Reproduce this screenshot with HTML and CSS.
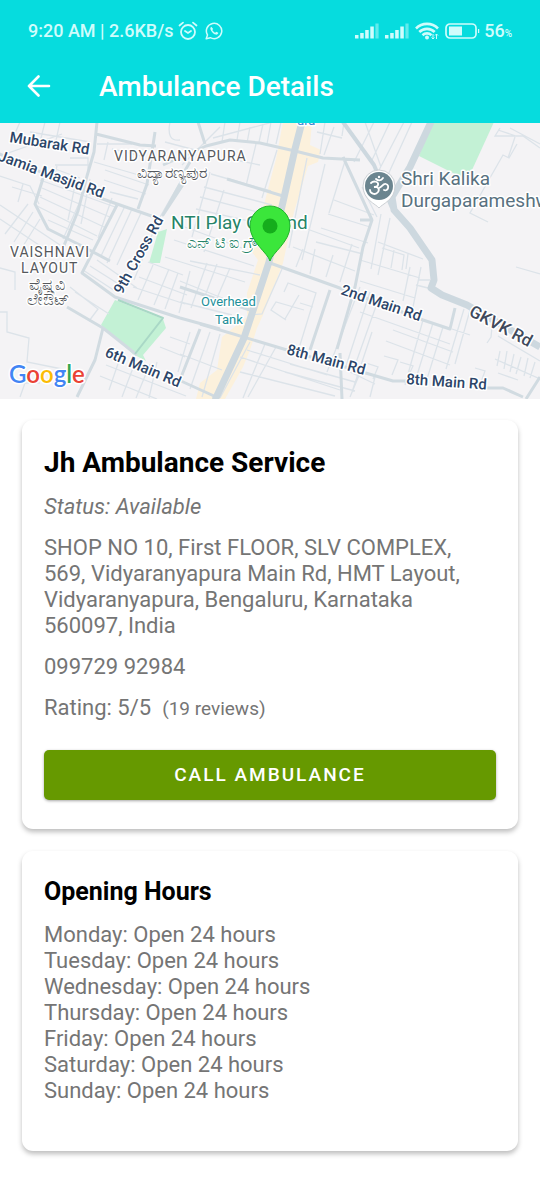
FILE: index.html
```html
<!DOCTYPE html>
<html lang="en">
<head>
<meta charset="utf-8">
<meta name="viewport" content="width=device-width, initial-scale=1">
<title>Ambulance Details</title>
<link rel="stylesheet" href="styles.css">
</head>
<body>
<header class="header">
  <div class="status-bar">
    <span class="status-text">9:20 AM | 2.6KB/s</span>
    <svg class="alarm" width="20" height="20" viewBox="0 0 20 20" fill="none" stroke="currentColor" stroke-width="1.8" stroke-linecap="round"><circle cx="10" cy="11" r="7"/><path d="M1.5 4.5 5 1.6M18.5 4.5 15 1.6M7 10l3 2 3-2"/></svg>
    <svg class="whatsapp" width="18" height="18" viewBox="0 0 18 18"><path d="M1.2 16.8 2.5 13A7.7 7.7 0 1 1 5.3 15.700z" fill="none" stroke="currentColor" stroke-width="1.5" stroke-linejoin="round"/><path d="M6.300 4.700c-1.200.7-1.200 2.200-.3 3.700 1.200 2.200 3 3.700 4.900 4.200 1.300.2 2.400-.6 2.400-1.800l-2-1.100-1.100 1.100c-1.300-.5-2.300-1.500-2.900-2.700l.9-1z" fill="currentColor"/></svg>
    <span class="spacer"></span>
    <svg class="signal" width="24" height="16" viewBox="0 0 24 16" fill="currentColor"><path d="M0 12h3.500v3.500H0zM5.200 10h3.500v5.500H5.200zM10.200 7h3.500v8.500h-3.500zM15.300 3.500h3.500v12h-3.500z"/><path d="M20.400.5h3.200v15h-3.200z" opacity=".45"/></svg>
    <svg class="signal" width="24" height="16" viewBox="0 0 24 16" fill="currentColor"><path d="M0 12h3.500v3.500H0zM5.200 10h3.500v5.500H5.200zM10.200 7h3.500v8.500h-3.500zM15.300 3.500h3.500v12h-3.500z"/><path d="M20.400.5h3.200v15h-3.200z" opacity=".45"/></svg>
    <svg class="wifi" width="24" height="18" viewBox="0 0 24 18" fill="none" stroke="currentColor" stroke-width="2.600"><path d="M1 6.500a15.500 15.500 0 0 1 22 0M4.300 10a11 11 0 0 1 15.400 0M7.500 13.200a6.500 6.500 0 0 1 9 0"/><circle cx="12" cy="15.500" r="2" fill="currentColor" stroke="none"/><path d="M18 12v5m-1.500-1.500L18 17l1.500-1.500M21.500 17v-5m-1.500 1.500 1.500-1.500 1.500 1.500" stroke-width="1"/></svg>
    <svg class="battery" width="35" height="16" viewBox="0 0 35 16"><rect x="1" y="1" width="30" height="14" rx="4" fill="none" stroke="currentColor" stroke-width="1.700"/><rect x="4" y="3.500" width="13" height="9" fill="currentColor"/><path d="M33 6h1.200v4H33z" fill="currentColor"/></svg>
    <span class="status-text">56<small>%</small></span>
  </div>
  <div class="toolbar">
    <button class="back" type="button" aria-label="Back"><svg width="24" height="24" viewBox="0 0 24 24" fill="none" stroke="currentColor" stroke-width="2.600" stroke-linecap="round" stroke-linejoin="round"><path d="M22 11H2M11.500 1.500 2 11l9.500 9.500"/></svg></button>
    <h1>Ambulance Details</h1>
  </div>
</header>

<svg class="map" viewBox="0 1 540 276" preserveAspectRatio="xMidYMid slice" role="img" aria-label="Map of Vidyaranyapura">
  <rect y="0" width="540" height="278" fill="#f4f3f5"/>
  <path class="commercial" d="M283 0h29l-2 23 11 5-3 12-10 4-14 46-11 51-20 52-6 13-7 22-7 17-18 32h-29l4-16 17-13 5-33 25-20v-24l11-33-6-8 16-63 8-30z"/>
  <g class="park">
    <path d="M431 0h63l-22 48-9 8-44-22z"/>
    <path d="M158 110l9-3-7 34h-11z"/>
    <path d="M115 178l48 19 3 9-23 27 3 6-13-7-32-29z"/>
  </g>
  <g class="lane">
    <path d="M20 0l-8 18M45 0l-5 20M60 0l-5 23M0 34l62-22M30 10l60 10M0 54l30 10 9 18M12 65l30 9M23 62l-5 18M0 83l60 40M0 97l48 32M28 82L5 112M33 90L14 120M40 97l-20 32M55 43h35l-3 10M57 44l-4 15M55 47l25 9M70 36h18v12M97 22h35M94 40l55 16M108 20l-4 18M112 27l30 7M105 48l44 15M104 58l42 14M110 70l28 7M40 58l75 27M42 66l70 30M40 75l64 30M37 84l60 30M48 98l45 20M75 63l-7 35M90 57l-9 45M82 75L63 117M112 76l-14 40M125 84l-24 50M132 87l-25 54M141 91l-24 52M158 98l-24 60"/>
    <path d="M170 0q-4 20 10 18M165 20l30 8M183 55L160 95M220 5l-38 38M225 0l-3 20M240 0l-3 18M250 5l-3 16M263 2l-4 18M271 0l-4 22M281 0l-5 22M213 16l60-16M256 22l-10 42M277 28l-15 48M235 38l25 5M211 52l60 17M204 65l68 18M200 75l65 17M196 87l66 15M210 50l-18 65M224 68l-20 62M182 104l60 22M174 118l80 26M165 135l80 25"/>
    <path d="M325 0l-5 32M334 5l-10 28M344 0l-2 14M317 10l25 6M307 36l-18 90M325 42l-23 96M334 78l40 15M328 92l42 13M321 106l47 15M316 120l47 12M345 39l-16 52M299 104l60 22M293 125l62 24M374 0l-20 40M365 0l16 45M390 0l-18 38M404 0l-27 52M412 0l-25 55M411 45l20-40M500 6l-5 8h28l17 12M510 6l30 16M498 8l18 6M517 22l-8 14-6-3-33 58 18 9M515 15l-7 21M362 65l15 30M381 92l-10 55M390 96l-12 57M378 120l45 17M382 126l22 7-2 15M394 128l-3 18M408 132l-2 15"/>
    <path d="M0 146l15 4v18M0 190h7v20l22 6-2 24 40 8M20 275l5-14h15M62 250l12 4M70 165l28 22-9 12M75 170l34 22M83 148l32 21M90 144l35 22M97 138l40 28M148 140l35 13M139 155l48 18M133 165l52 17M153 143l-15 35M169 147l-15 36M178 151l-13 36M122 230l-13 38M136 238l-14 37M150 242l-14 34M157 240l-8 36M106 243l80 31M100 254l57 23M170 215l20 7M160 225l25 10M190 210l-12 40M210 210l-20 57M220 212l-18 63M180 232l42 16M190 149l-11 42M207 141l-16 45M217 142l-15 40M230 146l-16 37M190 139l70 14M180 159l62 25M180 180l52 13"/>
    <path d="M282 147l-20 45-12 1M284 170l4-9 28 10-16 52M286 198l-15-10 5-8 28 8M299 173l-14 24M300 181l13 4M296 145l7-18M310 152l5-25M326 155l7-22M340 160l12-38M360 165l-33 85M370 170l-24 74M380 173l-27 76M360 159l55 17M360 138l60 18M360 190l90 32M393 208l60 22M386 219l64 24M410 145l-7 34M421 145l-8 40M418 158h12M416 163l12 3M423 198l-18 65M433 201l-19 62M443 205l-16 52M464 187l-18 60M470 188l-15 54M452 207l18 6M250 220l-30 56M265 222l-22 54M276 225l-28 50M240 235l100 33M247 228l80 25M240 250l95 24M290 242l65 18M285 250l70 19M350 250l25 12M372 210l-20 60M384 234l14 4-6 15M400 240l13 4-8 17M363 240l15 5-5 12M475 246l10 3-5 14M493 195l-2 20-4 6M498 214l42 25M495 237l45 20M500 229l-3 15M507 229l-3 18M514 232l-4 18M521 235l-5 17M528 236l-4 18M535 240l-5 16M516 145l24 7M498 251l20 7M350 275l10-24M370 275l5-20"/>
  </g>
  <g class="street">
    <path d="M97 0l-3 30-7 24-9 35-17 42M96 12l44 11 16 1M155 10l-8 52-9 25M45 50L35 82l13 25 32 16 30 16M117 83L82 151l33 24 65 21 40 11M180 62l-17 31 23-35M163 43l43-19 24-6 30 3 35 8 28 7 37 2M198 0l7 22M190 40l-10 17M227 57l56 17M67 185l36 21M103 206l-8 32-18 37M103 206l34 27M180 165l70 23M200 207l-22 56M170 254l44 20M360 98l12 0-9 27-8 40-18 62M330 168l-20 60M340 231l2 46M423 198l27 9 5-21M487 266h16l20 9M540 255l-14 22M343 35l29 63"/>
  </g>
  <path class="street" d="M-5 30l105 46 60 21M270 141l67 24 86 33M200 202l87 26 106 31 22 0"/>
  <path class="street park-edge" d="M118 178l45 18-28 36"/>
  <g class="avenue">
    <path d="M302 0l-7 27-12 53-14 60-25 76-29 62"/>
    <path d="M431 0l-21 45-18 30 2 13 16 18 22 32 2 20-3 8 11 7 25 10 73 42"/>
    <path class="fork" d="M343 0l31 43 18 43"/>
  </g>
  <g class="place">
    <text x="114" y="39" class="area">VIDYARANYAPURA</text>
    <text x="137" y="56" class="kannada">ವಿದ್ಯಾರಣ್ಯಪುರ</text>
    <text x="10" y="135" class="area">VAISHNAVI</text>
    <text x="21" y="151" class="area">LAYOUT</text>
    <text x="29" y="168" class="kannada">ವೈಷ್ಣವಿ</text>
    <text x="27" y="183" class="kannada">ಲೇಔಟ್</text>
  </g>
  <g class="road-name">
    <text transform="translate(9 20) rotate(9)">Mubarak Rd</text>
    <text transform="translate(-3 38) rotate(20)">Jamia Masjid Rd</text>
    <text transform="translate(122 173) rotate(-61)">9th Cross Rd</text>
    <text transform="translate(340 172) rotate(19)">2nd Main Rd</text>
    <text transform="translate(104 234) rotate(23)">6th Main Rd</text>
    <text transform="translate(286 232) rotate(15)">8th Main Rd</text>
    <text transform="translate(406 262) rotate(4)">8th Main Rd</text>
    <text class="highway" transform="translate(468 193) rotate(28)">GKVK Rd</text>
  </g>
  <text class="ground" x="171" y="107">NTI Play Ground</text>
  <text class="ground-kannada" x="187" y="126">ಎನ್ ಟಿ ಐ ಗ್ರೌಂಡ್</text>
  <text class="tank" x="201" y="184">Overhead</text>
  <text class="tank" x="215" y="202">Tank</text>
  <text class="stop" x="297" y="3">ura</text>
  <text class="temple" x="401" y="63">Shri Kalika</text>
  <text class="temple" x="401" y="85">Durgaparameshw</text>
  <path d="M379 86c-3-4-16-8-16-22a16 16 0 0 1 32 0c0 14-13 18-16 22z" fill="#fff" stroke="#ccd0d4"/>
  <circle cx="379" cy="64" r="14" fill="#6b858f"/>
  <path d="M371 61c3-3 8-1 7 2-.5 2-4 2-4 2 4-.5 6 2 4 5-3 4-8 1-8-2M379 66c3-1 4-5 7-4 4 1 2 8-2 6M376 57c2 2 5 2 7-1" fill="none" stroke="#fff" stroke-width="1.800" stroke-linecap="round"/>
  <circle cx="379" cy="55" r="1.200" fill="#fff"/>
  <path d="M270 139c-2-8-20-19-20-35a20 20 0 0 1 40 0c0 16-18 27-20 35z" fill="#3be63b" stroke="#20b42b"/>
  <circle cx="270" cy="104" r="7.500" fill="#15ad1c"/>
  <text class="google" x="9" y="261"><tspan fill="#4285f4">G</tspan><tspan fill="#ea4335">o</tspan><tspan fill="#fbbc05">o</tspan><tspan fill="#4285f4">g</tspan><tspan fill="#34a853">l</tspan><tspan fill="#ea4335">e</tspan></text>
</svg>

<main class="content">
  <section class="card details">
    <h2>Jh Ambulance Service</h2>
    <p class="availability">Status: Available</p>
    <p>SHOP NO 10, First FLOOR, SLV COMPLEX, 569, Vidyaranyapura Main Rd, HMT Layout, Vidyaranyapura, Bengaluru, Karnataka 560097, India</p>
    <p>099729 92984</p>
    <p class="rating"><span>Rating: 5/5</span><span class="reviews">(19 reviews)</span></p>
    <button class="call" type="button">CALL AMBULANCE</button>
  </section>
  <section class="card hours">
    <h2>Opening Hours</h2>
    <ul>
      <li>Monday: Open 24 hours</li>
      <li>Tuesday: Open 24 hours</li>
      <li>Wednesday: Open 24 hours</li>
      <li>Thursday: Open 24 hours</li>
      <li>Friday: Open 24 hours</li>
      <li>Saturday: Open 24 hours</li>
      <li>Sunday: Open 24 hours</li>
    </ul>
  </section>
</main>
</body>
</html>
```
FILE: styles.css
```css
* { box-sizing: border-box; }
body { margin: 0; background: #fff; color: #757575; font: 22px/26px Roboto, "Noto Sans", sans-serif; }
h1, h2, p, ul { margin: 0; padding: 0; }
ul { list-style: none; }
svg { display: block; flex: none; }

.header { background: #06dcde; color: #fff; }
.status-bar { display: flex; align-items: center; height: 51px; padding: 10px 28px 0; color: #d0fcfc; }
.status-text { font-size: 18px; line-height: 24px; font-weight: 500; }
.status-text small { font-size: 10px; line-height: 10px; }
.alarm { margin-left: 4px; }
.whatsapp { margin-left: 7px; }
.spacer { flex: 1; }
.signal { margin-right: 6px; }
.wifi { margin-right: 6px; }
.battery { margin-right: 4px; }
.toolbar { display: flex; align-items: center; height: 72px; padding: 0 27px; }
.back { display: flex; padding: 0; border: 0; background: none; color: inherit; }
.toolbar h1 { margin-left: 48px; font-size: 28px; line-height: 32px; font-weight: 500; }

.map { width: 100%; height: 276px; font-family: Roboto, "Noto Sans", sans-serif; }
.map text { paint-order: stroke; stroke: #fff; stroke-width: 3px; stroke-linejoin: round; }
.commercial { fill: #fcf1dc; }
.park { fill: #c3f1d5; }
.lane { fill: none; stroke: #dce3e9; stroke-width: 1.3; }
.street { fill: none; stroke: #d1dbe1; stroke-width: 3; stroke-linejoin: round; }
.park-edge { stroke: #a9d8c6; stroke-width: 2; }
.avenue { fill: none; stroke: #cdd8df; stroke-width: 7; stroke-linejoin: round; }
.fork { stroke-width: 4; }
.area { font-size: 14px; letter-spacing: 1px; fill: #55585c; }
.kannada { font-size: 16px; fill: #55585c; }
.road-name { font-size: 15px; font-weight: 500; fill: #2c4568; }
.highway { font-size: 17px; fill: #3f4a5c; }
.ground { font-size: 19px; fill: #268468; }
.ground-kannada { font-size: 16px; fill: #268468; }
.tank { font-size: 13px; fill: #21909a; }
.stop { font-size: 13px; fill: #3c83cf; }
.temple { font-size: 19px; fill: #587180; }
.map .google { font-family: Lato, sans-serif; font-size: 24px; font-weight: 600; }

.content { display: grid; gap: 22px; padding: 21px 22px 49px; }
.card { display: flex; flex-direction: column; padding: 27px 22px 29px; border-radius: 11px; background: #fff; box-shadow: 0 3px 5px rgba(0, 0, 0, .26); }
.card h2 { color: #000; font-size: 25px; line-height: 32px; font-weight: 700; }
.card.details { gap: 15px; }
.card.details h2 { font-size: 28px; }
.availability { font-style: italic; }
.rating { display: flex; align-items: baseline; gap: 11px; }
.reviews { font-size: 19px; }
.call { height: 50px; margin-top: 13px; padding: 0; border: 0; border-radius: 5px; background: #669900; box-shadow: 0 1px 3px rgba(0, 0, 0, .35); color: #fff; font: 500 19px/24px Roboto, sans-serif; letter-spacing: 2px; }
.card.hours { gap: 14px; padding-top: 25px; padding-bottom: 47px; }
```
